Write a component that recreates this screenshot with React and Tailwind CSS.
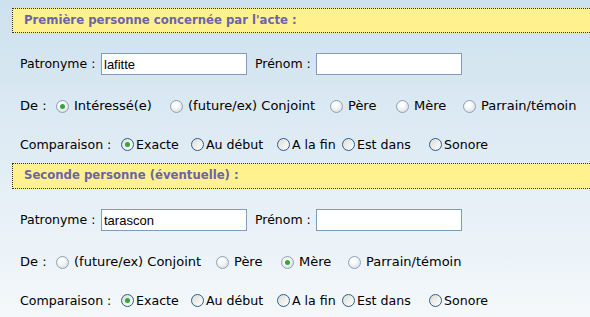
import React from "react";

const font = { fontFamily: '"DejaVu Sans", Verdana, sans-serif' };

function Radio({ checked, variant }) {
  const base =
    variant === "sphere"
      ? "border-[#8ea2b6] bg-[radial-gradient(circle_at_40%_35%,#ffffff_20%,#d5dadf_90%)]"
      : "border-[#2c5d8f] bg-gradient-to-br from-[#dcdcd6] to-white";
  return (
    <span
      className={`inline-flex w-[13px] h-[13px] shrink-0 rounded-full border items-center justify-center ${base}`}
    >
      {checked && (
        <span className="w-[5px] h-[5px] rounded-full bg-[#35a535]" />
      )}
    </span>
  );
}

function Option({ w, label, checked, variant, gap }) {
  return (
    <span className={`flex items-center ${w}`}>
      <Radio checked={checked} variant={variant} />
      <span className={`${gap} text-black whitespace-nowrap`}>{label}</span>
    </span>
  );
}

function Banner({ children, h }) {
  return (
    <div
      className={`ml-[12px] ${h} flex items-center pl-[11px] bg-[#fff28e] border-t border-b border-l border-dotted border-[#3b321a]`}
    >
      <span className="font-bold text-[11.7px] text-[#6a64a8] whitespace-nowrap" style={font}>
        {children}
      </span>
    </div>
  );
}

function NameRow({ value, mt }) {
  return (
    <div className={`${mt} flex items-center h-[22px] pl-[20px] text-[12.5px]`}>
      <span className="w-[81px] whitespace-nowrap">Patronyme :</span>
      <input
        readOnly
        value={value}
        className="w-[146px] h-[22px] border border-[#7f9db9] bg-white pl-[2px] text-[13px] text-black outline-none"
        style={{ fontFamily: '"Liberation Sans", Arial, sans-serif' }}
      />
      <span className="ml-[8px] w-[61px] whitespace-nowrap">Prénom :</span>
      <input
        readOnly
        value=""
        className="w-[146px] h-[22px] border border-[#7f9db9] bg-white text-[13px] outline-none"
      />
    </div>
  );
}

function CompRow({ mt }) {
  return (
    <div className={`${mt} flex items-center h-[22px] pl-[20px] text-[12.6px]`}>
      <span className="w-[101px] whitespace-nowrap">Comparaison :</span>
      <Option w="w-[70px]" label="Exacte" checked variant="flat" gap="ml-[2px]" />
      <Option w="w-[86px]" label="Au début" variant="flat" gap="ml-[2px]" />
      <Option w="w-[65px]" label="A la fin" variant="flat" gap="ml-[2px]" />
      <Option w="w-[87px]" label="Est dans" variant="flat" gap="ml-[2px]" />
      <Option w="" label="Sonore" variant="flat" gap="ml-[2px]" />
    </div>
  );
}

export default function App() {
  return (
    <div
      className="w-[590px] h-[317px] overflow-hidden bg-gradient-to-b from-[#cde1ee] to-[#f4f8fb] pt-[8px] text-black"
      style={font}
    >
      <Banner h="h-[25px]">Première personne concernée par l'acte :</Banner>
      <NameRow value="lafitte" mt="mt-[20px]" />
      <div className="mt-[20px] flex items-center h-[22px] pl-[20px] text-[13px]">
        <span className="w-[36px] whitespace-nowrap">De :</span>
        <Option w="w-[114px]" label="Intéressé(e)" checked variant="sphere" gap="ml-[5px]" />
        <Option w="w-[160px]" label="(future/ex) Conjoint" variant="sphere" gap="ml-[5px]" />
        <Option w="w-[66px]" label="Père" variant="sphere" gap="ml-[5px]" />
        <Option w="w-[67px]" label="Mère" variant="sphere" gap="ml-[5px]" />
        <Option w="" label="Parrain/témoin" variant="sphere" gap="ml-[5px]" />
      </div>
      <CompRow mt="mt-[17px]" />

      <div className="mt-[7px]">
        <Banner h="h-[26px]">Seconde personne (éventuelle) :</Banner>
      </div>
      <NameRow value="tarascon" mt="mt-[20px]" />
      <div className="mt-[20px] flex items-center h-[22px] pl-[20px] text-[13px]">
        <span className="w-[36px] whitespace-nowrap">De :</span>
        <Option w="w-[160px]" label="(future/ex) Conjoint" variant="sphere" gap="ml-[5px]" />
        <Option w="w-[65px]" label="Père" variant="sphere" gap="ml-[5px]" />
        <Option w="w-[67px]" label="Mère" checked variant="sphere" gap="ml-[5px]" />
        <Option w="" label="Parrain/témoin" variant="sphere" gap="ml-[5px]" />
      </div>
      <CompRow mt="mt-[17px]" />
    </div>
  );
}
